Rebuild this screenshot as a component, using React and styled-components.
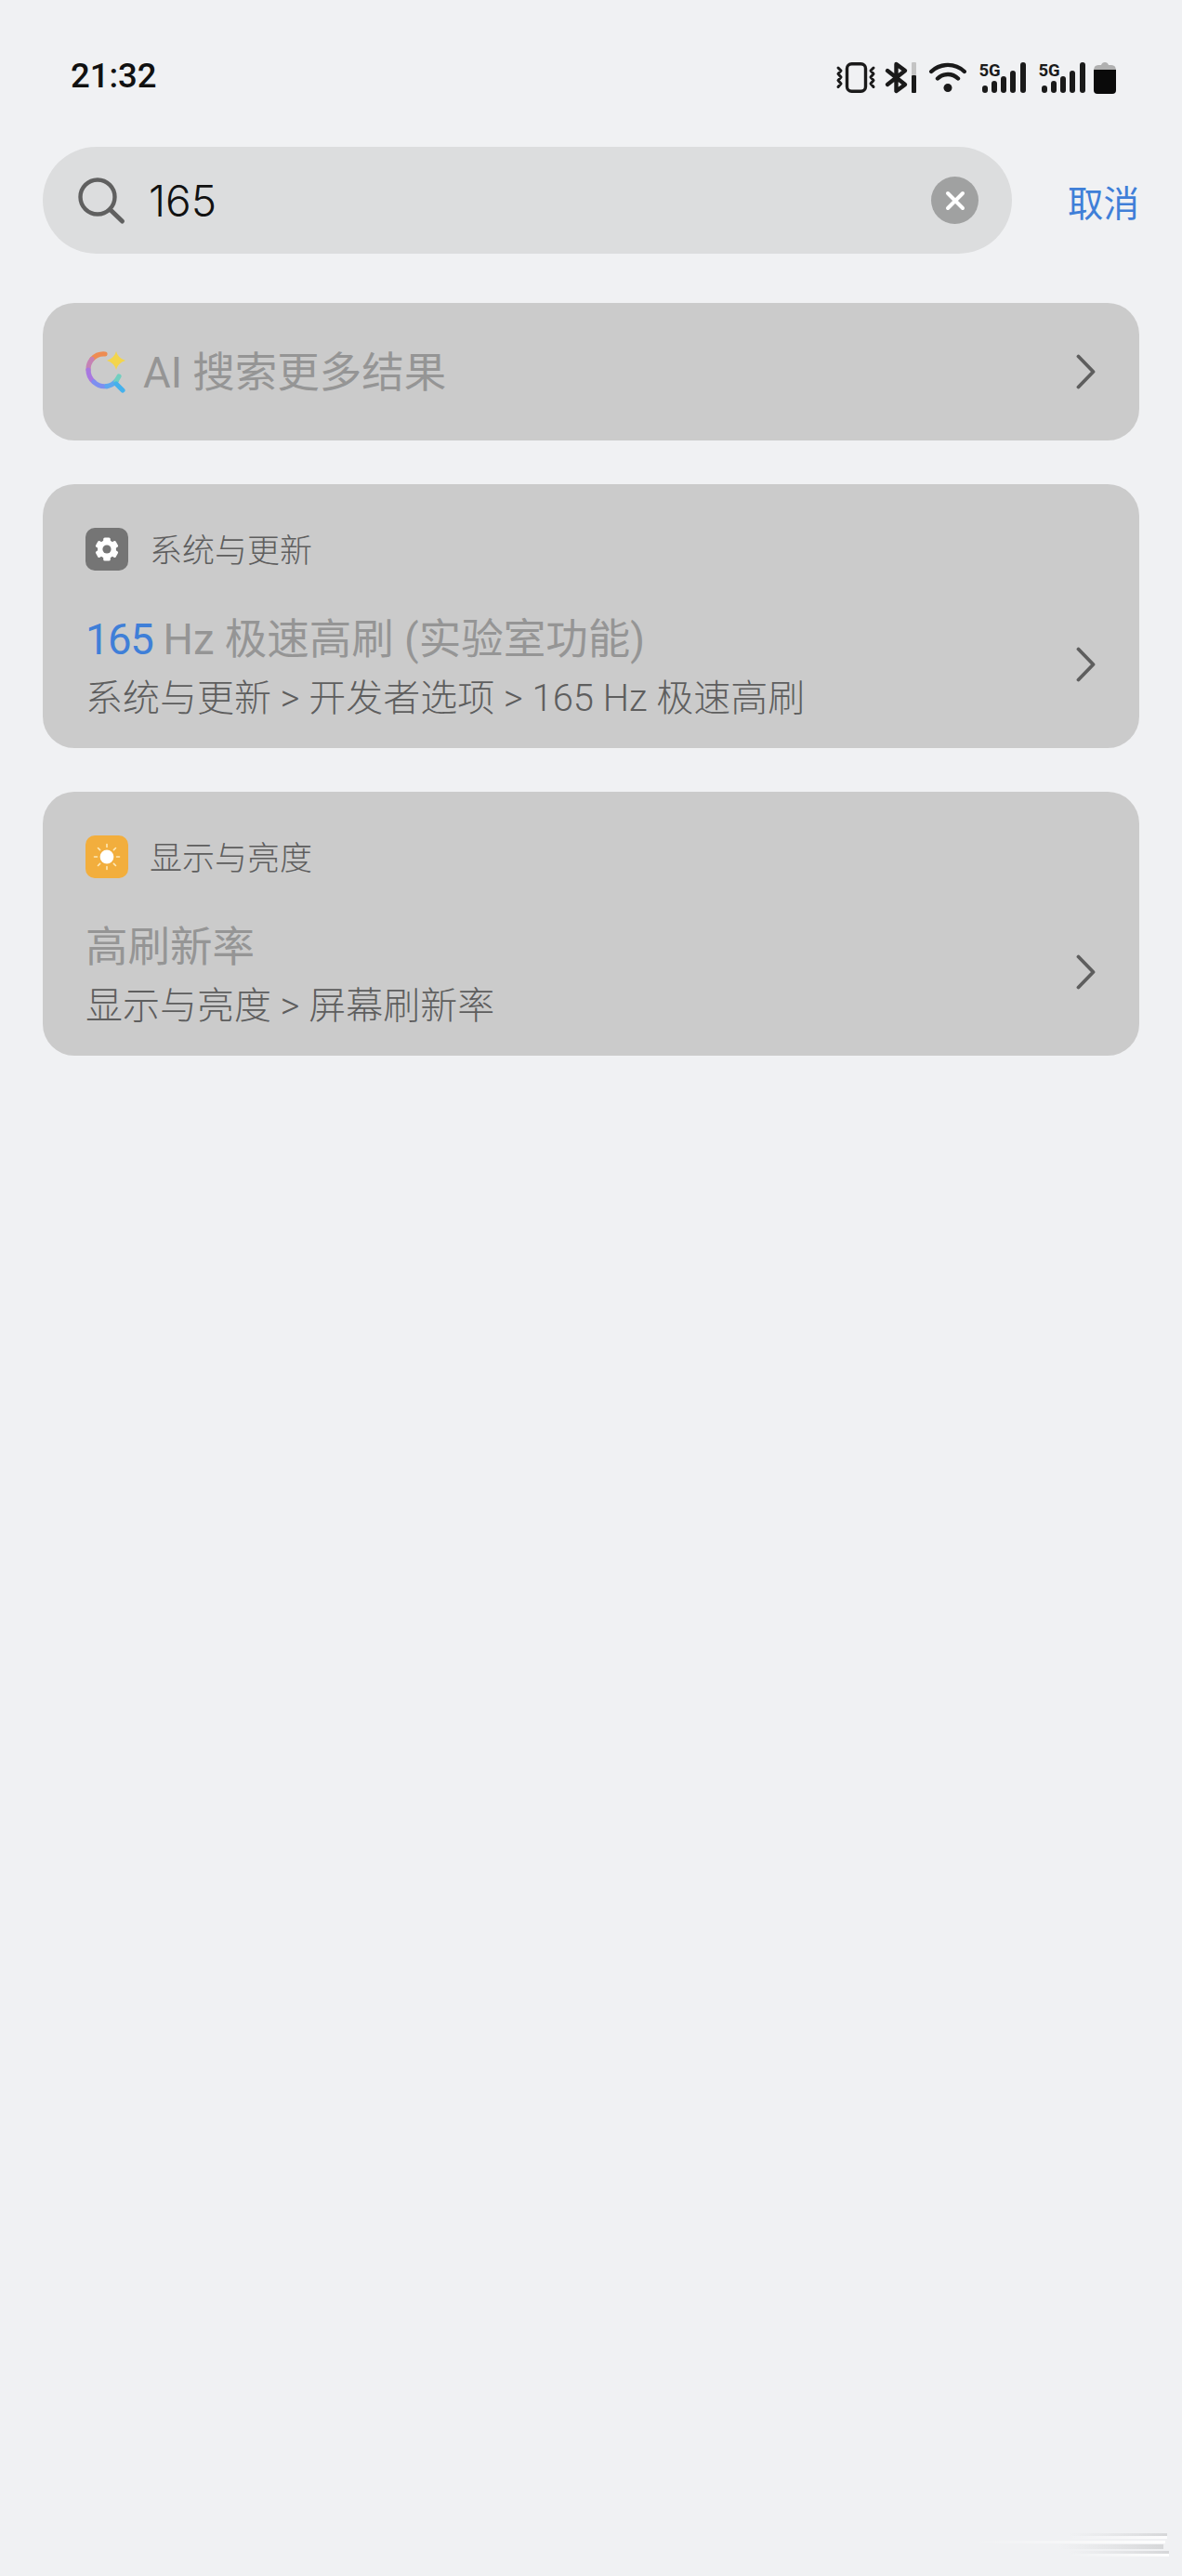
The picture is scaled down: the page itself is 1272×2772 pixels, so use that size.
import React from "react";
import styled, { createGlobalStyle } from "styled-components";

const GlobalStyle = createGlobalStyle`
  html, body {
    margin: 0;
    padding: 0;
    background: #f0f1f3;
  }
  * {
    box-sizing: border-box;
  }
`;

const Chevron = () => (
  <ChevronIcon viewBox="0 0 21 38">
    <path d="M2.5 2.5 L18.5 19 L2.5 35.5" fill="none" stroke="#5e5e5e" strokeWidth="3.8" strokeLinecap="round" strokeLinejoin="round" />
  </ChevronIcon>
);

const GearIcon = () => (
  <svg width="26" height="26" viewBox="0 0 26 26">
    <circle cx="13" cy="13" r="10" fill="#fff" />
    <g fill="#fff">
      {[0, 60, 120, 180, 240, 300].map((deg) => (
        <rect key={deg} x="9.2" y="0.5" width="7.6" height="6" rx="1.6" transform={`rotate(${deg} 13 13)`} />
      ))}
    </g>
    <circle cx="13" cy="13" r="4.6" fill="#757575" />
  </svg>
);

const SunIcon = () => (
  <svg width="30" height="30" viewBox="0 0 30 30">
    <circle cx="15" cy="15" r="7.4" fill="#fff" />
    <g stroke="#fde9b8" strokeWidth="1.6" strokeLinecap="round">
      <path d="M15 1.5V4.5M15 25.5V28.5M1.5 15H4.5M25.5 15H28.5M5.5 5.5L7.6 7.6M22.4 22.4L24.5 24.5M24.5 5.5L22.4 7.6M7.6 22.4L5.5 24.5" />
    </g>
  </svg>
);

const AiIcon = () => (
  <AiSvg viewBox="0 0 44 46">
    <g fill="none" strokeWidth="5.2" strokeLinecap="round">
      <path d="M21 4 A17 17 0 0 0 7 9.5" stroke="#ee8c52" />
      <path d="M7 9.5 A17 17 0 0 0 3 21" stroke="#c582b4" />
      <path d="M3 21 A17 17 0 0 0 9 34" stroke="#a878e0" />
      <path d="M9 34 A17 17 0 0 0 23 38.6" stroke="#7d8ff0" />
      <path d="M23 38.6 A17 17 0 0 0 33 33" stroke="#5ea8ee" />
      <path d="M33 33 L36 28" stroke="#72cfc0" />
      <path d="M33 36 L40 43" stroke="#45b1ec" />
    </g>
    <path d="M33 1 Q34.5 8 43 11 Q35 13.5 33 21 Q31 13.5 23 11 Q31.5 8 33 1 Z" fill="#f3d54c" />
  </AiSvg>
);

const SignalIcon = () => (
  <StatusSvg width="51" height="33" viewBox="0 0 51 33">
    <SignalLabel x="0.5" y="14.5">5G</SignalLabel>
    <g fill="#1a1a1a">
      <rect x="4" y="25" width="6" height="8" rx="3" />
      <rect x="14" y="20" width="6" height="13" rx="3" />
      <rect x="24" y="15" width="6" height="18" rx="3" />
      <rect x="34" y="9" width="6" height="24" rx="3" />
      <rect x="45" y="0" width="6" height="33" rx="3" />
    </g>
  </StatusSvg>
);

const StatusIcons = () => (
  <Icons>
    <StatusSvg width="42" height="33" viewBox="0 0 42 33">
      <rect x="11.5" y="1.7" width="20" height="29.6" rx="5" fill="none" stroke="#1a1a1a" strokeWidth="3.4" />
      <path
        d="M2 6 L5 9 L2 12.5 L5 16 L2 19.5 L5 23 L2 26.5 M40 6 L37 9 L40 12.5 L37 16 L40 19.5 L37 23 L40 26.5"
        fill="none"
        stroke="#1a1a1a"
        strokeWidth="3"
        strokeLinecap="round"
        strokeLinejoin="round"
      />
    </StatusSvg>
    <BluetoothSvg width="34" height="33" viewBox="0 0 34 33">
      <path
        d="M2 9 L21 24 L11.5 31 L11.5 2 L21 9 L2 24"
        fill="none"
        stroke="#1a1a1a"
        strokeWidth="4.4"
        strokeLinejoin="round"
        strokeLinecap="round"
      />
      <rect x="28" y="0" width="5" height="14" rx="1" fill="#c4c4c4" />
      <rect x="28" y="14" width="5" height="19" rx="1" fill="#1a1a1a" />
    </BluetoothSvg>
    <StatusSvg width="40" height="33" viewBox="0 0 40 33">
      <g fill="none" stroke="#1a1a1a" strokeWidth="4.4" strokeLinecap="round">
        <path d="M2.2 10 C12 0.5 28 0.5 37.8 10" />
        <path d="M9 17.5 C15 11.5 25 11.5 31 17.5" />
      </g>
      <circle cx="20" cy="27.5" r="4.5" fill="#1a1a1a" />
    </StatusSvg>
    <SignalIcon />
    <SignalIcon />
    <BatterySvg width="24" height="35" viewBox="0 0 24 35">
      <path d="M0 10 Q0 4 5 4 L8 4 Q9 1 12 1 Q15 1 16 4 L19 4 Q24 4 24 10 Z" fill="#b0b0b0" />
      <path d="M0 9 L24 9 L24 31 Q24 35 20 35 L4 35 Q0 35 0 31 Z" fill="#0a0a0a" />
    </BatterySvg>
  </Icons>
);

const ResultCard = ({ icon, tint, section, title, path }) => (
  <Card>
    <CardHeader>
      <SectionIcon $tint={tint}>{icon}</SectionIcon>
      <SectionName>{section}</SectionName>
    </CardHeader>
    <CardBody>
      <CardText>
        <ResultTitle>{title}</ResultTitle>
        <ResultPath>{path}</ResultPath>
      </CardText>
      <Chevron />
    </CardBody>
  </Card>
);

const App = () => {
  return (
    <Page>
      <GlobalStyle />
      <StatusBar>
        <Clock>21:32</Clock>
        <StatusIcons />
      </StatusBar>
      <SearchRow>
        <SearchBar>
          <svg width="54" height="54" viewBox="0 0 54 54">
            <circle cx="23" cy="23" r="18.5" fill="none" stroke="#606060" strokeWidth="4.4" />
            <path d="M36.5 36.5 L49.5 49" stroke="#606060" strokeWidth="5" strokeLinecap="round" />
          </svg>
          <SearchValue>165</SearchValue>
          <ClearButton>
            <svg width="24" height="24" viewBox="0 0 24 24">
              <path d="M4 4 L20 20 M20 4 L4 20" stroke="#fff" strokeWidth="4" strokeLinecap="round" />
            </svg>
          </ClearButton>
        </SearchBar>
        <CancelButton>取消</CancelButton>
      </SearchRow>
      <Results>
        <AiCard>
          <AiLabel>
            <AiIcon />
            <AiTitle>AI 搜索更多结果</AiTitle>
          </AiLabel>
          <Chevron />
        </AiCard>
        <ResultCard
          icon={<GearIcon />}
          tint="#757575"
          section="系统与更新"
          title={
            <>
              <Match>165</Match> Hz 极速高刷 (实验室功能)
            </>
          }
          path="系统与更新 > 开发者选项 > 165 Hz 极速高刷"
        />
        <ResultCard
          icon={<SunIcon />}
          tint="#f2ae3d"
          section="显示与亮度"
          title="高刷新率"
          path="显示与亮度 > 屏幕刷新率"
        />
      </Results>
      <Watermark viewBox="0 0 232 40">
        <defs>
          <linearGradient id="fade" x1="0" x2="1" y1="0" y2="0">
            <stop offset="0" stopColor="#fff" stopOpacity="0" />
            <stop offset="1" stopColor="#fff" stopOpacity="0.9" />
          </linearGradient>
          <linearGradient id="shade" x1="0" x2="1" y1="0" y2="0">
            <stop offset="0" stopColor="#d8d9db" stopOpacity="0" />
            <stop offset="1" stopColor="#cfd0d2" stopOpacity="0.8" />
          </linearGradient>
        </defs>
        <rect x="120" y="6" width="106" height="3" fill="url(#shade)" />
        <rect x="120" y="9" width="106" height="3" fill="url(#fade)" />
        <rect x="16" y="14" width="208" height="3" fill="url(#fade)" />
        <rect x="110" y="18" width="112" height="5" fill="url(#shade)" />
        <rect x="120" y="25" width="108" height="3" fill="url(#shade)" />
        <rect x="120" y="28" width="108" height="3" fill="url(#fade)" />
      </Watermark>
    </Page>
  );
};

export default App;

const fontStack = `Roboto, "Noto Sans CJK SC", sans-serif`;

const Page = styled.div`
  position: relative;
  width: 1272px;
  height: 2772px;
  padding: 0 46px;
  overflow: hidden;
  background: #f0f1f3;
  font-family: ${fontStack};
`;

const StatusBar = styled.div`
  display: flex;
  align-items: center;
  justify-content: space-between;
  height: 158px;
  padding: 9px 25px 0 30px;
`;

const Clock = styled.div`
  font-family: Roboto, sans-serif;
  font-size: 36.5px;
  font-weight: 500;
  color: #111;
  margin-top: -5px;
`;

const Icons = styled.div`
  display: flex;
  align-items: center;
  gap: 13px;
`;

const StatusSvg = styled.svg`
  flex: none;
  display: block;
  overflow: visible;
`;

const BluetoothSvg = styled(StatusSvg)`
  margin-left: -2px;
`;

const BatterySvg = styled(StatusSvg)`
  margin-left: -4px;
`;

const SignalLabel = styled.text`
  font-family: Roboto, sans-serif;
  font-size: 18.5px;
  font-weight: 700;
  fill: #1a1a1a;
`;

const SearchRow = styled.div`
  display: flex;
  align-items: center;
  justify-content: space-between;
`;

const SearchBar = styled.div`
  display: flex;
  align-items: center;
  width: 1043px;
  height: 115px;
  padding: 0 36px;
  border-radius: 58px;
  background: #dcddde;
`;

const SearchValue = styled.div`
  flex: 1;
  margin-left: 24px;
  font-family: Inter, sans-serif;
  font-size: 46px;
  font-weight: 300;
  color: #111;
`;

const ClearButton = styled.div`
  display: flex;
  align-items: center;
  justify-content: center;
  width: 51px;
  height: 51px;
  border-radius: 50%;
  background: #a0a1a1;
`;

const CancelButton = styled.div`
  font-size: 38.5px;
  color: #3f7fd8;
`;

const Results = styled.div`
  display: flex;
  flex-direction: column;
  gap: 47px;
  margin-top: 53px;
`;

const Card = styled.div`
  height: 284px;
  padding: 46px 41px 0 46px;
  border-radius: 34px;
  background: #cbcbcb;
`;

const AiCard = styled.div`
  display: flex;
  align-items: center;
  justify-content: space-between;
  height: 148px;
  padding: 0 47px 0 46px;
  border-radius: 34px;
  background: #cbcbcb;
`;

const AiLabel = styled.div`
  display: flex;
  align-items: center;
  gap: 18px;
`;

const AiSvg = styled.svg`
  width: 44px;
  height: 46px;
  flex: none;
`;

const CardHeader = styled.div`
  display: flex;
  align-items: center;
  gap: 23px;
`;

const SectionIcon = styled.div`
  display: flex;
  align-items: center;
  justify-content: center;
  width: 46px;
  height: 46px;
  border-radius: 10px;
  background: ${(props) => props.$tint};
`;

const SectionName = styled.div`
  margin-top: -3px;
  font-size: 35px;
  font-weight: 300;
  color: #5e5e5e;
`;

const CardBody = styled.div`
  display: flex;
  align-items: center;
  justify-content: space-between;
  margin-top: 44px;
  padding: 0 6px 12px 0;
`;

const CardText = styled.div`
  display: flex;
  flex-direction: column;
  margin-bottom: -12px;
`;

const ResultTitle = styled.div`
  font-size: 45.5px;
  font-weight: 400;
  line-height: 60px;
  color: #959595;
  white-space: nowrap;
`;

const AiTitle = styled(ResultTitle)`
  margin-top: 3px;
`;

const Match = styled.span`
  color: #3f7fd8;
  letter-spacing: -1.5px;
`;

const ResultPath = styled.div`
  margin-top: 3px;
  font-size: 40px;
  font-weight: 300;
  line-height: 60px;
  color: #5e5e5e;
  white-space: nowrap;
`;

const ChevronIcon = styled.svg`
  flex: none;
  width: 21px;
  height: 38px;
`;

const Watermark = styled.svg`
  position: absolute;
  right: 10px;
  bottom: 12px;
  width: 232px;
  height: 40px;
`;
